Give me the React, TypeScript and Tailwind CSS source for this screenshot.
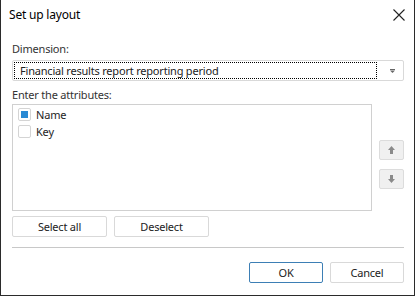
import React from "react";

const font = { fontFamily: '"Noto Sans", "Open Sans", sans-serif' };

export default function App() {
  return (
    <div
      className="w-[415px] h-[296px] bg-white border-l border-r border-b border-[#2b2b2b] flex flex-col text-[#1e1e1e] text-[11px] leading-[14px] tracking-[-0.2px]"
      style={font}
    >
      <div className="h-[30px] flex items-center justify-between pl-[8px] pr-[9px]">
        <span className="text-[12px] tracking-[-0.2px] text-black">Set up layout</span>
        <svg width="12" height="12" viewBox="0 0 12 12">
          <path d="M0.5 0.5 L11.5 11.5 M11.5 0.5 L0.5 11.5" stroke="#222" strokeWidth="1.1" />
        </svg>
      </div>
      <div className="pl-[11px] pr-[10px] flex flex-col">
        <div className="mt-[12px] h-[14px] text-[#333]">Dimension:</div>
        <div className="mt-[4px] h-[21px] border border-[#d9d9d9] rounded-[2px] flex items-center pl-[1px] pr-[8px]">
          <div className="flex-1 h-[17px] border border-dotted border-black flex items-center pl-[5px] text-[#222]">
            Financial results report reporting period
          </div>
          <div className="w-[18px] flex justify-end">
            <svg width="5" height="4" viewBox="0 0 5 4">
              <rect x="0" y="0" width="5" height="1" fill="#666" />
              <path d="M0 1.5 L5 1.5 L2.5 4 Z" fill="#666" />
            </svg>
          </div>
        </div>
        <div className="mt-[7px] h-[14px] text-[#333]">Enter the attributes:</div>
        <div className="mt-[2px] flex">
          <div className="w-[360px] h-[107px] border border-[#d0d0d0] pt-[3px] pl-[5px] flex flex-col gap-[4px]">
            <div className="flex items-center gap-[5px] h-[13px]">
              <div className="w-[13px] h-[13px] border border-[#d4d4d4] rounded-[2px] flex items-center justify-center">
                <div className="w-[7px] h-[7px] bg-[#2a8ad4]" />
              </div>
              <span>Name</span>
            </div>
            <div className="flex items-center gap-[5px] h-[13px]">
              <div className="w-[13px] h-[13px] border border-[#d4d4d4] rounded-[2px]" />
              <span>Key</span>
            </div>
          </div>
          <div className="ml-[7px] pt-[36px] flex flex-col gap-[9px]">
            <div className="w-[25px] h-[20px] bg-[#f0f0f0] border border-[#dcdcdc] rounded-[2px] flex items-center justify-center">
              <svg width="7" height="8" viewBox="0 0 7 8">
                <path d="M3.5 0 L7 4 L5 4 L5 8 L2 8 L2 4 L0 4 Z" fill="#8a8a8a" />
              </svg>
            </div>
            <div className="w-[25px] h-[20px] bg-[#f0f0f0] border border-[#dcdcdc] rounded-[2px] flex items-center justify-center">
              <svg width="7" height="8" viewBox="0 0 7 8">
                <path d="M3.5 8 L7 4 L5 4 L5 0 L2 0 L2 4 L0 4 Z" fill="#8a8a8a" />
              </svg>
            </div>
          </div>
        </div>
        <div className="mt-[5px] flex gap-[7px]">
          <button className="w-[95px] h-[21px] border border-[#d9d9d9] rounded-[2px] bg-white text-[#222]">Select all</button>
          <button className="w-[95px] h-[21px] border border-[#d9d9d9] rounded-[2px] bg-white text-[#222]">Deselect</button>
        </div>
        <div className="mt-[10px] h-px bg-[#c8c8c8]" />
        <div className="mt-[14px] flex justify-end gap-[7px]">
          <button className="w-[74px] h-[21px] border border-[#3d7fb5] rounded-[2px] bg-white text-[#222]">OK</button>
          <button className="w-[74px] h-[21px] border border-[#d9d9d9] rounded-[2px] bg-white text-[#222]">Cancel</button>
        </div>
      </div>
    </div>
  );
}
